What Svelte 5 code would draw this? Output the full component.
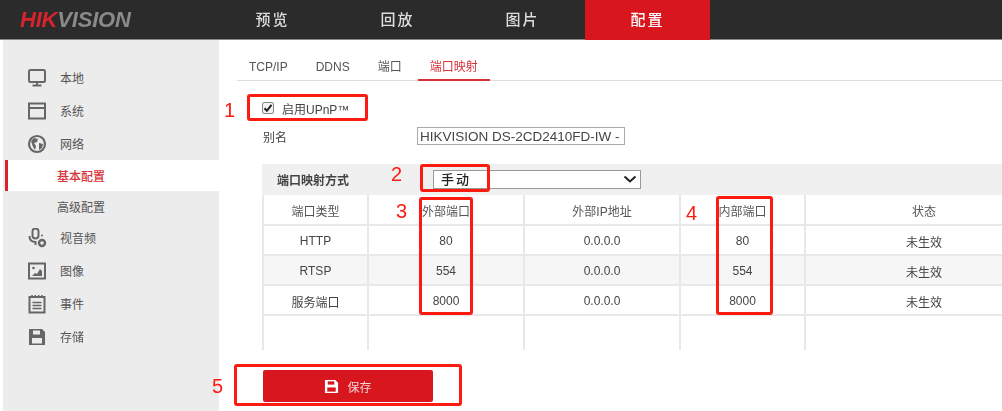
<script>
  const navItems = [
    { label: "预览" },
    { label: "回放" },
    { label: "图片" },
    { label: "配置", active: true }
  ];

  const tabs = [
    { label: "TCP/IP" },
    { label: "DDNS" },
    { label: "端口" },
    { label: "端口映射", active: true }
  ];

  const menu = [
    { label: "本地", icon: "monitor" },
    { label: "系统", icon: "window" },
    { label: "网络", icon: "globe" },
    { label: "基本配置", sub: true, active: true },
    { label: "高级配置", sub: true },
    { label: "视音频", icon: "mic" },
    { label: "图像", icon: "image" },
    { label: "事件", icon: "event" },
    { label: "存储", icon: "disk" }
  ];

  const rows = [
    { type: "HTTP", ext: "80", ip: "0.0.0.0", int: "80", state: "未生效" },
    { type: "RTSP", ext: "554", ip: "0.0.0.0", int: "554", state: "未生效", shaded: true },
    { type: "服务端口", ext: "8000", ip: "0.0.0.0", int: "8000", state: "未生效" }
  ];

  // red callouts drawn over the page
  const marks = [
    { n: "1", x: 224, y: 98 },
    { n: "2", x: 391, y: 162 },
    { n: "3", x: 396, y: 199 },
    { n: "4", x: 686, y: 201 },
    { n: "5", x: 212, y: 374 }
  ];
  const boxes = [
    { x: 247, y: 94, w: 121, h: 27 },
    { x: 420, y: 164, w: 70, h: 28 },
    { x: 419, y: 197, w: 54, h: 118 },
    { x: 716, y: 196, w: 57, h: 119 },
    { x: 234, y: 364, w: 228, h: 42 }
  ];
</script>

<div class="page">
  <header class="topbar">
    <div class="logo"><span class="hik">HIK</span><span class="vision">VISION</span></div>
    <nav class="nav">
      {#each navItems as item}
        <div class="nav-item" class:active={item.active}>{item.label}</div>
      {/each}
    </nav>
  </header>

  <div class="body">
    <aside class="sidebar">
      {#each menu as item}
        <div class="menu-row" class:sub={item.sub} class:active={item.active}>
          {#if item.icon}
            <svg class="menu-icon" viewBox="0 0 20 20" width="20" height="20">
              {#if item.icon === "monitor"}
                <rect x="2" y="2" width="16" height="12" rx="1.5" fill="none" stroke="#666" stroke-width="2" />
                <path d="M10 14v3M5.5 17.5h9" fill="none" stroke="#666" stroke-width="2" />
              {:else if item.icon === "window"}
                <rect x="2" y="2.5" width="16" height="15" fill="none" stroke="#666" stroke-width="2" />
                <path d="M2 7h16" stroke="#666" stroke-width="2" />
              {:else if item.icon === "globe"}
                <circle cx="10" cy="10" r="8" fill="none" stroke="#666" stroke-width="2.2" />
                <path d="M4 7l3-3 4 1-1 3-3 1 2 3-1 4-2-3zM12 9l4 1-1 4-3 2z" fill="#666" />
              {:else if item.icon === "mic"}
                <rect x="5.5" y="0.5" width="6" height="10" rx="3" fill="none" stroke="#666" stroke-width="2" />
                <path d="M2.5 8c0 4 2 6 6 6v3" fill="none" stroke="#666" stroke-width="2" />
                <circle cx="15" cy="15" r="3" fill="none" stroke="#666" stroke-width="2.4" />
                <circle cx="15" cy="7.5" r="1" fill="#666" />
              {:else if item.icon === "image"}
                <rect x="2" y="2.5" width="16" height="15" fill="none" stroke="#666" stroke-width="2" />
                <path d="M5 15l3-3 2 1 3-5 2 2v5z" fill="#666" />
                <circle cx="6.5" cy="7" r="1.3" fill="#666" />
              {:else if item.icon === "event"}
                <rect x="2.5" y="3" width="15" height="15.5" fill="none" stroke="#666" stroke-width="2" />
                <path d="M5 1v3M8.3 1v3M11.7 1v3M15 1v3M5.5 8.5h9M5.5 11.5h9M5.5 14.5h9" stroke="#666" stroke-width="1.5" />
              {:else if item.icon === "disk"}
                <path d="M2 2h13l3 3v13H2z" fill="#666" />
                <rect x="6" y="3.5" width="7" height="4" fill="#ececec" />
                <rect x="5" y="11" width="10" height="5.5" fill="#ececec" />
              {/if}
            </svg>
          {/if}
          <span>{item.label}</span>
        </div>
      {/each}
    </aside>

    <main class="main">
      <div class="tabs">
        {#each tabs as tab}
          <div class="tab" class:active={tab.active}>{tab.label}</div>
        {/each}
      </div>

      <div class="upnp">
        <span class="check">
          <svg viewBox="0 0 12 12" width="12" height="12">
            <path d="M2.5 6.2l2.4 2.6 4.6-6" fill="none" stroke="#222" stroke-width="2" />
          </svg>
        </span>
        <span>启用UPnP™</span>
      </div>

      <div class="alias">
        <span class="alias-label">别名</span>
        <input class="alias-input" type="text" value="HIKVISION DS-2CD2410FD-IW -" />
      </div>

      <div class="map-mode">
        <span class="map-label">端口映射方式</span>
        <div class="select-wrap">
          <select class="map-select">
            <option>手动</option>
          </select>
          <svg class="chevron" viewBox="0 0 14 8" width="14" height="8">
            <path d="M1.5 1.5L7 6.5l5.5-5" fill="none" stroke="#222" stroke-width="2" />
          </svg>
        </div>
      </div>

      <div class="grid head">
        <div>端口类型</div>
        <div>外部端口</div>
        <div>外部IP地址</div>
        <div>内部端口</div>
        <div>状态</div>
      </div>
      {#each rows as row}
        <div class="grid" class:shaded={row.shaded}>
          <div>{row.type}</div>
          <div>{row.ext}</div>
          <div>{row.ip}</div>
          <div>{row.int}</div>
          <div>{row.state}</div>
        </div>
      {/each}
      <div class="grid filler">
        <div></div><div></div><div></div><div></div><div></div>
      </div>

      <button class="save">
        <svg viewBox="0 0 16 16" width="15" height="15">
          <path d="M1 1h11l3 3v11H1z" fill="#fff" />
          <rect x="4" y="2.5" width="7" height="3.5" fill="#d7161d" />
          <rect x="3.5" y="9" width="9" height="4.5" fill="#d7161d" />
        </svg>
        <span>保存</span>
      </button>
    </main>
  </div>

  {#each boxes as b}
    <div class="mark-box" style="left:{b.x}px;top:{b.y}px;width:{b.w}px;height:{b.h}px"></div>
  {/each}
  {#each marks as m}
    <div class="mark-num" style="left:{m.x}px;top:{m.y}px">{m.n}</div>
  {/each}
</div>

<style>
  :global(body) {
    margin: 0;
    background: #fff;
  }

  .page {
    position: relative;
    width: 1002px;
    height: 411px;
    overflow: hidden;
    font-family: "Liberation Sans", "Noto Sans CJK SC", sans-serif;
    color: #555;
    font-size: 12px;
  }

  /* the source is a slightly soft upscaled capture */
  .topbar,
  .body {
    filter: blur(0.4px);
  }

  .topbar {
    display: flex;
    height: 40px;
    background: #2b2b2b;
    border-bottom: 1px solid #888;
    box-sizing: border-box;
  }

  .logo {
    width: 210px;
    padding-left: 20px;
    box-sizing: border-box;
    font-size: 22px;
    line-height: 39px;
    font-weight: bold;
    font-style: italic;
    letter-spacing: -0.2px;
  }

  .hik {
    color: #d5242c;
  }

  .vision {
    color: #8a8a8a;
  }

  .nav {
    display: flex;
  }

  .nav-item {
    width: 125px;
    text-align: center;
    font-size: 15px;
    letter-spacing: 2px;
    line-height: 40px;
    color: #ddd;
    font-weight: 500;
  }

  .nav-item.active {
    background: #d7161d;
    color: #fff;
    height: 40px;
  }

  .body {
    display: flex;
    height: 371px;
  }

  .sidebar {
    width: 216px;
    margin-left: 3px;
    padding-top: 21px;
    background: #ececec;
    flex-shrink: 0;
  }

  .menu-row {
    display: flex;
    align-items: center;
    gap: 13px;
    height: 33px;
    padding-left: 24px;
    color: #555;
  }

  .menu-icon {
    flex-shrink: 0;
  }

  .menu-row.sub {
    height: 30px;
    padding-left: 54px;
  }

  .menu-row.active {
    height: 31px;
    background: #fff;
    color: #d7333a;
    font-weight: 500;
    box-shadow: inset 3px 0 0 #d7242c;
    margin-left: 2px;
    padding-left: 52px;
  }

  .main {
    flex: 1;
    min-width: 0;
    padding-left: 18px;
  }

  .tabs {
    display: flex;
    height: 41px;
    box-sizing: border-box;
    padding-top: 14px;
    border-bottom: 1px solid #ddd;
  }

  .tab {
    padding: 0 12px;
    line-height: 26px;
    height: 27px;
    box-sizing: border-box;
    color: #555;
    margin-right: 4px;
  }

  .tab.active {
    color: #d7333a;
    border-bottom: 2px solid #d7333a;
  }

  .upnp {
    display: flex;
    align-items: center;
    gap: 8px;
    margin: 19px 0 0 25px;
    height: 16px;
    color: #444;
  }

  .check {
    display: block;
    width: 12px;
    height: 12px;
    box-sizing: border-box;
    border: 1px solid #888;
    border-radius: 2px;
    background: #f2f2f2;
  }

  .check svg {
    display: block;
    margin: -1px;
  }

  .alias {
    display: flex;
    align-items: center;
    height: 20px;
    margin: 10px 0 0 26px;
  }

  .alias-label {
    width: 154px;
    color: #444;
    padding-top: 1px;
  }

  .alias-input {
    width: 208px;
    height: 18px;
    padding: 0 2px;
    box-sizing: border-box;
    border: 1px solid #aaa;
    font: 13.5px "Liberation Sans", sans-serif;
    color: #444;
    outline: none;
  }

  .map-mode {
    display: flex;
    align-items: center;
    height: 31px;
    margin: 18px 0 0 25px;
    background: #f0f0f0;
    color: #444;
    font-weight: 600;
    padding-left: 15px;
  }

  .map-label {
    width: 156px;
  }

  .select-wrap {
    position: relative;
    width: 208px;
    height: 19px;
  }

  .map-select {
    appearance: none;
    display: block;
    width: 208px;
    height: 19px;
    font: 500 13px "Liberation Sans", "Noto Sans CJK SC", sans-serif;
    color: #222;
    background: #fff;
    border: 1px solid #999;
    padding-left: 7px;
    letter-spacing: 2px;
  }

  .chevron {
    position: absolute;
    right: 4px;
    top: 5px;
  }

  .grid {
    display: grid;
    grid-template-columns: 105px 156px 156px 125px 238px;
    width: 780px;
    height: 30px;
    margin-left: 25px;
    box-sizing: border-box;
    border-bottom: 2px solid #e8e8e8;
    border-left: 2px solid #e8e8e8;
  }

  .grid.head {
    height: 31px;
  }

  .grid > div {
    display: flex;
    align-items: center;
    justify-content: center;
    border-right: 2px solid #e8e8e8;
    box-sizing: border-box;
    padding-top: 2px;
    color: #444;
  }

  .grid.head > div {
    color: #555;
  }

  .grid.shaded {
    background: #f6f6f6;
  }

  .grid.filler {
    height: 34px;
    border-bottom: none;
  }

  .save {
    display: flex;
    align-items: center;
    justify-content: center;
    gap: 8px;
    width: 170px;
    height: 32px;
    margin: 20px 0 0 26px;
    border: none;
    border-radius: 2px;
    background: #d7161d;
    color: #f5d5d5;
    font: 12px "Liberation Sans", "Noto Sans CJK SC", sans-serif;
  }

  .mark-box {
    position: absolute;
    box-sizing: border-box;
    border: 3px solid #fb1b10;
    border-radius: 3px;
  }

  .mark-num {
    position: absolute;
    font: 20px/24px "Liberation Sans", sans-serif;
    color: #fb1b10;
  }
</style>
